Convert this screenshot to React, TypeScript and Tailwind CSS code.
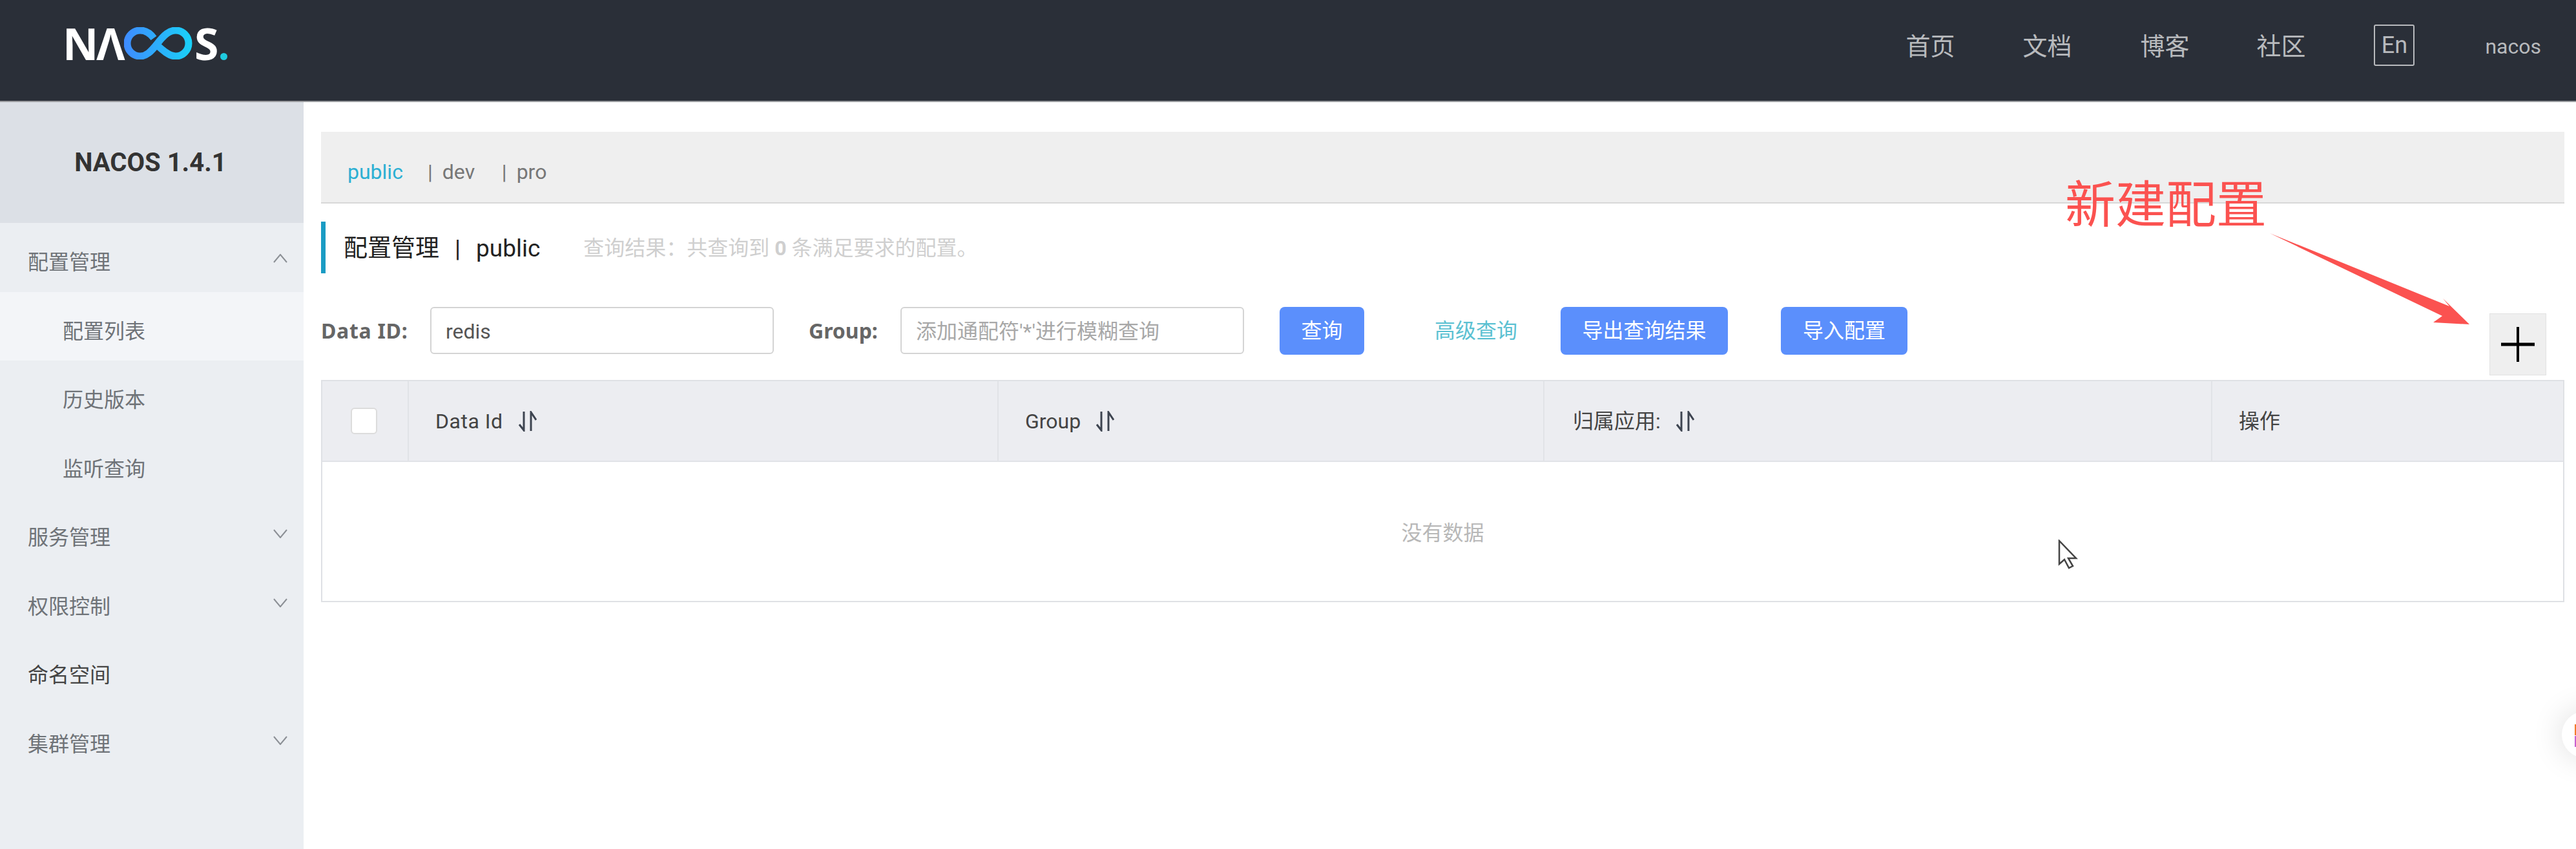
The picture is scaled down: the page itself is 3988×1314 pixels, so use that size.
import React from 'react';

const navItems = [
  { label: '首页', width: 'w-[75px]', gap: 'mr-[106px]' },
  { label: '文档', width: 'w-[76px]', gap: 'mr-[106px]' },
  { label: '博客', width: 'w-[76px]', gap: 'mr-[104px]' },
  { label: '社区', width: 'w-[76px]', gap: 'mr-[106px]' },
];

const menu = [
  { label: '配置管理', sub: false, icon: 'up' },
  { label: '配置列表', sub: true, active: true },
  { label: '历史版本', sub: true },
  { label: '监听查询', sub: true },
  { label: '服务管理', sub: false, icon: 'down' },
  { label: '权限控制', sub: false, icon: 'down' },
  { label: '命名空间', sub: false, dark: true },
  { label: '集群管理', sub: false, icon: 'down' },
];

const Chevron = ({ up }: { up?: boolean }) => (
  <svg width="22" height="14" viewBox="0 0 22 14" fill="none" stroke="#8b8f95" strokeWidth="2" className="-mt-[12px]">
    <path d={up ? 'M1 13L11 1L21 13' : 'M1 1L11 13L21 1'} />
  </svg>
);

const SortIcon = () => (
  <svg width="28" height="32" viewBox="0 0 28 32" fill="none" stroke="#3d4450" strokeWidth="3" className="shrink-0">
    <path d="M8 1V30L1 21" />
    <path d="M19 31V2L27 14" />
  </svg>
);

const Logo = () => (
  <div className="flex items-center h-[50px] text-white font-['Open_Sans',sans-serif] font-bold text-[68px] leading-none">
    <span className="w-[95px] tracking-[-3px] whitespace-nowrap">NΛ</span>
    <svg width="106" height="50" viewBox="0 0 106 50" fill="none" strokeWidth="11" className="shrink-0">
      <defs>
        <linearGradient id="inf" x1="0" y1="0" x2="106" y2="0" gradientUnits="userSpaceOnUse">
          <stop offset="0" stopColor="#3f8bff" />
          <stop offset="1" stopColor="#19d2f8" />
        </linearGradient>
      </defs>
      <path
        stroke="url(#inf)"
        d="M46 17C40 9 33 5 25 5A20 20 0 0 0 25 45C34 45 41 39 52 25C62 12 70 5 80 5A20 20 0 0 1 80 45C70 45 60 36 48 25"
      />
    </svg>
    <span className="ml-[3px] w-[38px]">S</span>
    <span className="w-[11px] h-[11px] rounded-full bg-[#1fcbe0] self-end mb-[-1px] ml-[2px]" />
  </div>
);

const Button = ({ label, width, margin }: { label: string; width: string; margin: string }) => (
  <button className={`${width} ${margin} h-[74px] rounded-[8px] bg-[#5b8ffc] text-white text-[32px] flex items-center justify-center shrink-0`}>
    {label}
  </button>
);

const App: React.FC = () => {
  return (
    <div className="relative w-[3988px] h-[1314px] overflow-hidden bg-white font-['Roboto','Noto_Sans_CJK_SC',sans-serif] text-[32px]">
      {/* Header */}
      <header className="h-[158px] bg-[#2a2f38] border-b-2 border-[#9a9c9f] flex items-start pl-[97px]">
        <div className="mt-[42px]">
          <Logo />
        </div>
        <nav className="ml-auto flex items-center h-[64px] mt-[38px] pr-[54px] text-[#b8babd]">
          {navItems.map((item) => (
            <span key={item.label} className={`${item.width} ${item.gap} text-[38px] leading-none whitespace-nowrap pt-[3px]`}>
              {item.label}
            </span>
          ))}
          <span className="w-[63px] h-[64px] border-2 border-[#b8babd] rounded-[3px] flex items-center justify-center text-[36px] leading-none mr-[109px]">
            En
          </span>
          <span className="text-[32px] leading-none pt-[3px]">nacos</span>
        </nav>
      </header>

      <div className="flex h-[1156px]">
        {/* Sidebar */}
        <aside className="w-[470px] shrink-0 bg-[#ebeef2]">
          <div className="h-[187px] bg-[#dce0e6] flex items-center justify-center pr-[4px] text-[#333] font-bold text-[40px]">
            NACOS 1.4.1
          </div>
          {menu.map((m) => (
            <div
              key={m.label}
              className={`h-[106.5px] flex items-center justify-between pt-[16px] pr-[25px] ${m.sub ? 'pl-[97px]' : 'pl-[43px]'} ${m.active ? 'bg-[#f3f5f8]' : ''} ${m.dark ? 'text-[#444]' : 'text-[#6f7378]'}`}
            >
              <span>{m.label}</span>
              {m.icon && <Chevron up={m.icon === 'up'} />}
            </div>
          ))}
        </aside>

        {/* Main */}
        <main className="flex-1 pl-[27px] pr-[18px] pt-[46px]">
          <div className="h-[111px] bg-[#efefef] border-b-2 border-[#d8d8d8] flex items-center pl-[41px] pt-[14px] text-[#777] text-[32px]">
            <span className="text-[#2cafd3] w-[82px]">public</span>
            <span className="ml-[42px]">|</span>
            <span className="ml-[15px] w-[49px]">dev</span>
            <span className="ml-[43px]">|</span>
            <span className="ml-[15px]">pro</span>
          </div>

          <div className="mt-[28px] h-[80px] border-l-[7px] border-[#1a9cc4] flex items-center pl-[28px] pt-[2px] text-[#222]">
            <span className="text-[37px] leading-none">配置管理</span>
            <span className="text-[37px] leading-none ml-[24px]">|</span>
            <span className="text-[37px] leading-none ml-[24px]">public</span>
            <span className="ml-[67px] text-[#cfcfcf] text-[32px] leading-none">
              查询结果：共查询到 <b>0</b> 条满足要求的配置。
            </span>
          </div>

          {/* Search row */}
          <div className="mt-[52px] h-[73px] flex items-start">
            <label className="w-[169px] h-[73px] flex items-center font-['Noto_Sans',sans-serif] font-bold text-[#666] text-[32px] tracking-[0.7px] shrink-0">Data ID:</label>
            <input
              readOnly
              value="redis"
              className="w-[532px] h-[73px] border-2 border-[#d4d4d4] rounded-[6px] pl-[22px] pt-[2px] text-[#555] text-[32px] outline-none shrink-0"
            />
            <label className="ml-[54px] w-[142px] h-[73px] flex items-center font-['Noto_Sans',sans-serif] font-bold text-[#666] text-[32px] shrink-0">Group:</label>
            <input
              readOnly
              placeholder="添加通配符'*'进行模糊查询"
              className="w-[532px] h-[73px] border-2 border-[#d4d4d4] rounded-[6px] pl-[22px] pt-[2px] text-[32px] outline-none placeholder:text-[#a8a8a8] shrink-0"
            />
            <Button label="查询" width="w-[131px]" margin="ml-[55px]" />
            <span className="ml-[109px] w-[128px] h-[73px] flex items-center text-[#5cc1d2] whitespace-nowrap shrink-0">高级查询</span>
            <Button label="导出查询结果" width="w-[259px]" margin="ml-[67px]" />
            <Button label="导入配置" width="w-[196px]" margin="ml-[82px]" />
            <button className="ml-auto mr-[28px] mt-[10px] w-[88px] h-[96px] bg-[#efefef] border border-[#e2e2e2] flex items-center justify-center shrink-0">
              <svg width="52" height="54" viewBox="0 0 52 54" stroke="#000" fill="none">
                <path d="M0 27H52" strokeWidth="5" />
                <path d="M26 0V54" strokeWidth="4" />
              </svg>
            </button>
          </div>

          {/* Table */}
          <div className="mt-[40px] border-2 border-[#dfe1e5] h-[344px]">
            <div className="h-[125px] bg-[#ecedf1] border-b-2 border-[#e1e3e7] flex text-[#444] text-[32px]">
              <div className="w-[134px] border-r-2 border-[#e1e3e7] flex items-center pl-[44px] shrink-0">
                <span className="w-[41px] h-[41px] bg-white border-2 border-[#dcdcdc] rounded-[6px]" />
              </div>
              <div className="w-[913px] border-r-2 border-[#e1e3e7] flex items-center pl-[41px] gap-[25px] shrink-0">
                <span className="tracking-[0.5px]">Data Id</span>
                <SortIcon />
              </div>
              <div className="w-[845px] border-r-2 border-[#e1e3e7] flex items-center pl-[41px] gap-[24px] shrink-0">
                <span>Group</span>
                <SortIcon />
              </div>
              <div className="w-[1034px] border-r-2 border-[#e1e3e7] flex items-center pl-[44px] gap-[24px] shrink-0">
                <span>归属应用:</span>
                <SortIcon />
              </div>
              <div className="flex-1 flex items-center pl-[41px]">
                <span>操作</span>
              </div>
            </div>
            <div className="h-[215px] flex items-center justify-center pt-[4px] text-[#b8b8b8]">没有数据</div>
          </div>
        </main>
      </div>

      {/* Annotation */}
      <span className="absolute left-[3197px] top-[274px] text-[78px] leading-[90px] text-[#fb5250] whitespace-nowrap">新建配置</span>
      <svg className="absolute left-[3500px] top-[350px]" width="340" height="170" viewBox="0 0 340 170" fill="#fb5250">
        <path d="M14 11L292 124L282 112L323 152L267 149L281 139Z" />
      </svg>

      {/* Mouse cursor */}
      <svg className="absolute left-[3186px] top-[835px]" width="32" height="46" viewBox="0 0 32 46" fill="#fff" stroke="#444" strokeWidth="2.5">
        <path d="M2 2V38L10 31L17 44L23 41L16 29H28Z" />
      </svg>

      {/* Floating round button cut off by the window edge */}
      <div className="absolute left-[3966px] top-[1101px] w-[72px] h-[72px] rounded-full bg-white shadow-[0_0_50px_rgba(0,0,0,0.14)] overflow-hidden">
        <span className="absolute left-[20px] top-[20px] w-[2px] h-[17px] bg-[#f27a2a]" />
        <span className="absolute left-[20px] top-[38px] w-[2px] h-[17px] bg-[#c860d0]" />
      </div>
    </div>
  );
};

export default App;
